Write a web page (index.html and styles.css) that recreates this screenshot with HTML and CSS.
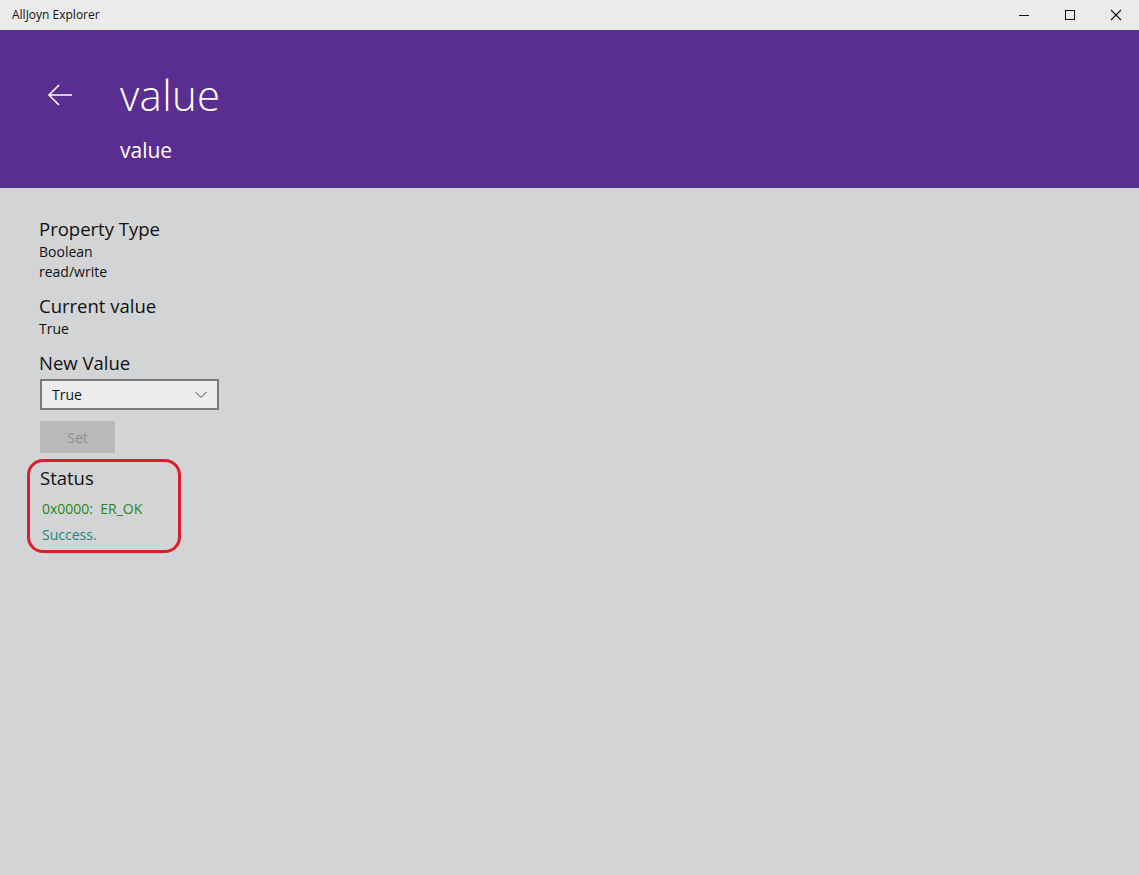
FILE: index.html
```html
<!DOCTYPE html>
<html>
<head>
<meta charset="utf-8">
<link rel="stylesheet" href="styles.css">
</head>
<body>
<div class="window">
  <div class="titlebar">
    <span class="app-title">AllJoyn Explorer</span>
    <div class="caption">
      <span class="cap-btn"><svg width="12" height="12" viewBox="0 0 12 12"><path d="M1 6.5h10" stroke="#111" stroke-width="1"/></svg></span>
      <span class="cap-btn"><svg width="12" height="12" viewBox="0 0 12 12"><rect x="1.5" y="1.5" width="9" height="9" fill="none" stroke="#111" stroke-width="1"/></svg></span>
      <span class="cap-btn"><svg width="12" height="12" viewBox="0 0 12 12"><path d="M1 1L11 11M11 1L1 11" stroke="#111" stroke-width="1.1"/></svg></span>
    </div>
  </div>
  <div class="header">
    <div class="back"><svg width="28" height="24" viewBox="0 0 28 24"><path d="M26 12H3M13 2L3 12l10 10" fill="none" stroke="#fff" stroke-width="1.6"/></svg></div>
    <div class="titles">
      <div class="page-title">value</div>
      <div class="page-sub">value</div>
    </div>
  </div>
  <div class="content">
    <div class="section">
      <div class="label">Property Type</div>
      <div class="text">Boolean</div>
      <div class="text">read/write</div>
    </div>
    <div class="section">
      <div class="label">Current value</div>
      <div class="text">True</div>
    </div>
    <div class="section">
      <div class="label">New Value</div>
      <div class="combo"><span>True</span><svg width="12" height="8" viewBox="0 0 12 8"><path d="M0.5 1l5.5 5.5 5.5-5.5" fill="none" stroke="#444" stroke-width="1"/></svg></div>
      <div class="setbtn">Set</div>
    </div>
    <div class="status">
      <div class="label">Status</div>
      <div class="ok">0x0000:&nbsp; ER_OK</div>
      <div class="success">Success.</div>
    </div>
  </div>
</div>
</body>
</html>
```
FILE: styles.css
```css
html, body { margin: 0; padding: 0; }
body { font-family: "Segoe UI", "Open Sans", "Noto Sans", sans-serif; }
.window { width: 1139px; height: 875px; display: flex; flex-direction: column; background: #d3d4d6; }
.titlebar { height: 30px; background: #ebebeb; display: flex; align-items: center; justify-content: space-between; }
.app-title { font-size: 12px; color: #111; margin-left: 12px; margin-top: -2px; }
.caption { display: flex; height: 30px; }
.cap-btn { width: 46px; height: 30px; display: flex; align-items: center; justify-content: center; }
.header { height: 158px; background: #5a2d91; display: flex; color: #fff; }
.back { width: 120px; padding-top: 53px; padding-left: 46px; box-sizing: border-box; }
.titles { display: flex; flex-direction: column; }
.page-title { font-size: 42px; font-weight: 300; line-height: 50px; margin-top: 40px; letter-spacing: 0.3px; }
.page-sub { font-size: 21px; line-height: 28px; margin-top: 16px; }
.content { padding: 28px 0 0 39px; display: flex; flex-direction: column; }
.section { margin-bottom: 11px; }
.label { font-size: 18.5px; line-height: 26px; color: #111; }
.text { font-size: 14px; line-height: 20px; color: #111; }
.combo { width: 179px; height: 31px; box-sizing: border-box; border: 2px solid #7a7a7a; background: #ececec; margin: 3px 0 0 1px; display: flex; align-items: center; justify-content: space-between; padding: 0 10px 0 10px; font-size: 14px; color: #111; }
.setbtn { width: 75px; height: 32px; margin: 11px 0 0 1px; background: #b9b9b9; color: #8f8f8f; font-size: 14px; display: flex; align-items: center; justify-content: center; }
.status { width: 154px; height: 94px; box-sizing: border-box; border: 3px solid #d8202b; border-radius: 16px; margin: -5px 0 0 -12px; padding: 3px 0 0 10px; }
.ok { font-size: 14px; color: #2a8420; line-height: 20px; margin: 8px 0 0 2px; }
.success { font-size: 14px; color: #1c8779; line-height: 20px; margin: 6px 0 0 2px; }
```
